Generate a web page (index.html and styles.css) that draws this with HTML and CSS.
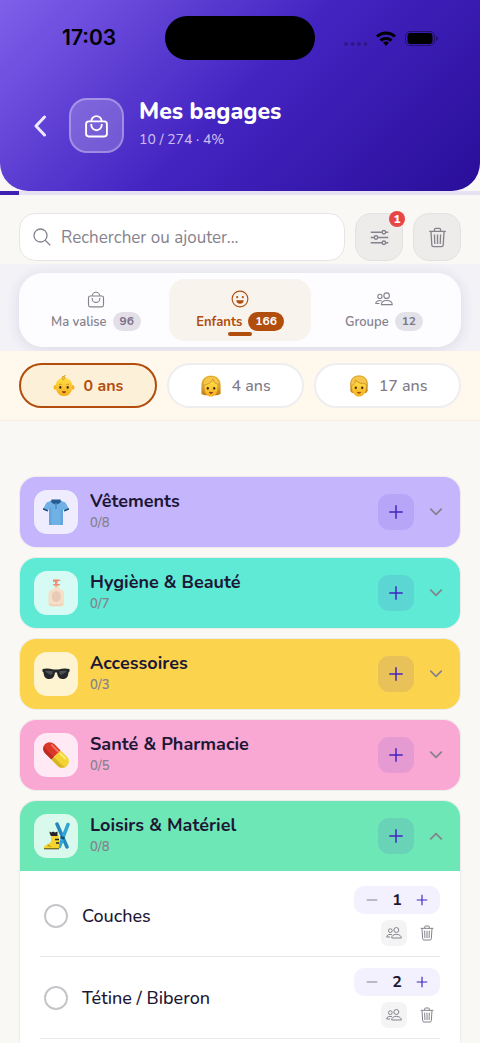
FILE: index.html
```html
<!doctype html>
<html lang="fr">
    <head>
        <meta charset="UTF-8" />
        <meta name="viewport" content="width=device-width, initial-scale=1.0" />
        <title>Mes bagages</title>
        <link rel="stylesheet" href="styles.css">
    </head>
    <body>
        <!-- Icon sprite -->
        <svg class="sprite" aria-hidden="true">
            <symbol id="bag" viewBox="0 0 24 24">
                <rect x="2" y="8" width="20" height="14.5" rx="2.5" />
                <path d="M7 8a5 5 0 0 1 10 0M7 10.5v1a5 5 0 0 0 10 0v-1" />
            </symbol>
            <symbol id="trash" viewBox="0 0 24 24">
                <path d="M2.5 5h19M4.5 5l1 15.5a2 2 0 0 0 2 2h9a2 2 0 0 0 2-2L19.5 5M8.5 5V3A1.5 1.5 0 0 1 10 1.5h4A1.5 1.5 0 0 1 15.5 3v2M12 8.5v11M8.5 8.5l.4 11M15.5 8.5l-.4 11" />
            </symbol>
            <symbol id="people" viewBox="0 0 24 24">
                <circle cx="15.5" cy="7.5" r="3.7" />
                <circle cx="6.5" cy="8.5" r="2.8" />
                <path d="M8.5 19.5c0-3.500 3-5.500 7-5.500s7.500 2 7.500 5.500zM9 14.700C5 13 1 15 1 18h5" />
            </symbol>
            <symbol id="plus" viewBox="0 0 24 24">
                <path d="M12 3v18M3 12h18" />
            </symbol>
            <symbol id="minus" viewBox="0 0 24 24">
                <path d="M3 12h18" />
            </symbol>
            <symbol id="chevron" viewBox="0 0 24 24">
                <path d="M3 7l9 9 9-9" />
            </symbol>
            <linearGradient id="skin" x1="0" y1="0" x2="0" y2="1">
                <stop offset="0" stop-color="#ffdf45" />
                <stop offset="1" stop-color="#f5ad20" />
            </linearGradient>
            <linearGradient id="hair" x1="0" y1="0" x2="0" y2="1">
                <stop offset="0" stop-color="#fbd75c" />
                <stop offset="1" stop-color="#c07a12" />
            </linearGradient>
        </svg>

        <div class="app">
            <header class="header">
                <div class="status">
                    <span class="time">17:03</span>
                    <span class="island"></span>
                    <svg class="signals" viewBox="0 -1 95 20" aria-hidden="true">
                        <g opacity=".25"><circle cx="2" cy="15" r="2" /><circle cx="8.5" cy="15" r="2" /><circle cx="15" cy="15" r="2" /><circle cx="21.5" cy="15" r="2" /></g>
                        <g fill="none" stroke="#000" stroke-width="3">
                            <path d="M33 7.5a13.5 13.5 0 0 1 18 0M36.5 11.5a8.5 8.5 0 0 1 11 0" />
                        </g>
                        <path d="M39 13.5q3-2 6 0l-3 3.500z" />
                        <rect x="61.5" y="2.5" width="29" height="14" rx="4.5" fill="none" stroke="#000" opacity=".4" />
                        <rect x="63.5" y="4" width="25" height="11" rx="3" />
                        <path d="M92 7v5q2-1 2-2.500T92 7z" opacity=".4" />
                    </svg>
                </div>
                <div class="heading">
                    <button class="back" aria-label="Retour">
                        <svg viewBox="0 0 14 22"><path d="M11.5 2L3 11l8.500 9" /></svg>
                    </button>
                    <span class="heading-icon"><svg><use href="#bag" /></svg></span>
                    <div class="heading-text">
                        <h1>Mes bagages</h1>
                        <p>10 / 274 · 4%</p>
                    </div>
                </div>
            </header>
            <div class="progress"><span class="progress-bar" style="width: 4%"></span></div>

            <div class="toolbar">
                <label class="search">
                    <svg viewBox="0 0 18 18"><circle cx="7.5" cy="7.5" r="6.5" /><path d="M12.2 12.200l5 5" /></svg>
                    <input type="text" placeholder="Rechercher ou ajouter..." aria-label="Rechercher ou ajouter" />
                </label>
                <button class="tool" aria-label="Filtres">
                    <svg viewBox="0 0 24 24">
                        <path d="M2 6h13M19 6h3M2 12h4M10 12h12M2 18h13M19 18h3" />
                        <circle cx="17" cy="6" r="2" /><circle cx="8" cy="12" r="2" /><circle cx="17" cy="18" r="2" />
                    </svg>
                    <span class="badge">1</span>
                </button>
                <button class="tool" aria-label="Supprimer"><svg><use href="#trash" /></svg></button>
            </div>

            <div class="tabs-wrap">
                <nav class="tabs">
                    <button class="tab">
                        <svg><use href="#bag" /></svg>
                        <span class="tab-label">Ma valise <b class="count count-mauve">96</b></span>
                    </button>
                    <button class="tab active">
                        <svg viewBox="0 0 24 24">
                            <circle cx="12" cy="12" r="10.5" />
                            <path class="solid" d="M8 14.500h8c-.3 1.800-1.800 3-4 3s-3.700-1.200-4-3z" />
                            <circle class="solid" cx="8.2" cy="9.5" r=".6" /><circle class="solid" cx="15.8" cy="9.5" r=".6" />
                        </svg>
                        <span class="tab-label">Enfants <b class="count">166</b></span>
                    </button>
                    <button class="tab">
                        <svg><use href="#people" /></svg>
                        <span class="tab-label">Groupe <b class="count">12</b></span>
                    </button>
                </nav>
            </div>

            <div class="children">
                <button class="child selected">
                    <svg viewBox="0 0 24 24">
                        <circle cx="3" cy="13.5" r="2.5" fill="#f5b521" /><circle cx="21" cy="13.5" r="2.5" fill="#f5b521" />
                        <path d="M12 3c-6 0-9 4-9 9.500C3 19 7 23 12 23s9-4 9-10.500C21 7 18 3 12 3z" fill="url(#skin)" />
                        <path d="M12.5 5.500c-3-.5-3.500-3.500 0-4.500-1 1-.5 2 1 2.500" fill="none" stroke="#d99c19" stroke-width="1.2" />
                        <ellipse cx="8" cy="13.5" rx="1.2" ry="1.6" fill="#3d2a1d" /><ellipse cx="16" cy="13.5" rx="1.2" ry="1.6" fill="#3d2a1d" />
                        <path d="M6.5 10.500q1.500-1 3 0M14.500 10.500q1.500-1 3 0" fill="none" stroke="#bb7815" stroke-width=".7" />
                        <path d="M10 18.300h4q-2 2.500-4 0z" fill="#8b4220" stroke="#8b4220" />
                    </svg>
                    0 ans
                </button>
                <button class="child">
                    <svg viewBox="0 0 24 24">
                        <path d="M12 .5C5 .5 1.500 5 1.500 11v9.500q2 2 5 1.500h11q3 .5 5-1.500V11C22.500 5 19 .5 12 .5z" fill="url(#hair)" />
                        <path d="M5 10c5 0 7.500-1.500 9-3.500 1 2 3 3.500 5 3.500v5c0 5-3 8.500-7 8.500S5 20 5 15z" fill="url(#skin)" />
                        <path d="M3 11C8 11 12.500 8.500 14 4.500c1 3.500 4 5.500 7 6 0-6-4-9-9-9S3 5 3 11z" fill="#f6c64a" stroke="#c98a1c" stroke-width=".7" />
                        <ellipse cx="8.5" cy="14.5" rx="1.2" ry="1.5" fill="#3d2a1d" /><ellipse cx="15.5" cy="14.5" rx="1.2" ry="1.5" fill="#3d2a1d" />
                        <path d="M10 19h4q-2 2.300-4 0z" fill="#8b4220" stroke="#8b4220" />
                    </svg>
                    4 ans
                </button>
                <button class="child">
                    <svg viewBox="0 0 24 24">
                        <path d="M12 .5C6 .5 2.500 4 2.500 10v7q.5 2.500 3 3h13q2.500-.5 3-3v-7C21.500 4 18 .5 12 .5z" fill="url(#hair)" />
                        <path d="M4.5 10c2-.5 3-2 3.500-3.500C11 9 15 10 19.500 10v5c0 5-3.500 8.500-7.500 8.500S4.500 20 4.500 15z" fill="url(#skin)" />
                        <path d="M3.5 12.500C2 5 6 1 12 1s10 4 8.500 11.500c-.5-2-1-2.500-2-3C14.500 9.500 10.500 8 8 5.500c.5 3-1.500 5-4.500 7z" fill="#f6c64a" stroke="#c98a1c" stroke-width=".7" />
                        <ellipse cx="8.5" cy="14" rx="1.2" ry="1.5" fill="#3d2a1d" /><ellipse cx="15.5" cy="14" rx="1.2" ry="1.5" fill="#3d2a1d" />
                        <path d="M10 19h4q-2 2-4 0z" fill="#8b4220" stroke="#8b4220" stroke-width=".7" />
                    </svg>
                    17 ans
                </button>
            </div>

            <main class="list">
                <!-- Clothes -->
                <section class="category">
                    <div class="category-head lilac">
                        <span class="category-icon">
                            <svg viewBox="0 0 28 28">
                                <path d="M9.5 2.500L4.500 4.500.8 11.500l4.700 2L7 11V27h14V11l1.500 2.500 4.700-2-3.700-7-5-2z" fill="#70b1e5" />
                                <path d="M7 11v16h2.500V9zM18.500 11v16H21V11z" fill="#5398d2" opacity=".45" />
                                <path d="M9.5 1.500h9L19 4l-3.500 2.500L14 5l-1.500 1.500L9 4z" fill="#265b94" />
                                <path d="M.8 11.500l4.700 2 .6-1.200L1.500 10zM27.200 11.500l-4.700 2-.6-1.200L26.500 10z" fill="#204a7c" />
                                <path d="M14 6v5" stroke="#397bb7" />
                            </svg>
                        </span>
                        <div class="category-text"><h2>Vêtements</h2><p>0/8</p></div>
                        <button class="add" aria-label="Ajouter"><svg><use href="#plus" /></svg></button>
                        <button class="toggle" aria-label="Ouvrir"><svg><use href="#chevron" /></svg></button>
                    </div>
                </section>

                <!-- Hygiene -->
                <section class="category">
                    <div class="category-head teal">
                        <span class="category-icon">
                            <svg viewBox="0 0 28 28">
                                <path d="M13 4h2.500v5H13z" fill="#f3b49b" />
                                <path d="M11 .5h6q1.500 0 1.500 1.500h-3v2.500h-2.500V2.500L11 3z" fill="#f08b6c" />
                                <rect x="11" y="5" width="7" height="1.5" rx=".7" fill="#ee8d70" />
                                <path d="M12 8h5v2c3.500.5 5 2 5 5v10q0 2.500-3 2.500H9.500q-3 0-3-2.500V15c0-3 2-4.500 5.500-5z" fill="#f5dfc6" />
                                <ellipse cx="14.3" cy="17.5" rx="4.5" ry="5.5" fill="#e9cab9" />
                                <path d="M7.5 25.500q6 2 13 0" fill="none" stroke="#e5c7b0" />
                            </svg>
                        </span>
                        <div class="category-text"><h2>Hygiène &amp; Beauté</h2><p>0/7</p></div>
                        <button class="add" aria-label="Ajouter"><svg><use href="#plus" /></svg></button>
                        <button class="toggle" aria-label="Ouvrir"><svg><use href="#chevron" /></svg></button>
                    </div>
                </section>

                <!-- Accessories -->
                <section class="category">
                    <div class="category-head yellow">
                        <span class="category-icon">
                            <svg viewBox="0 0 28 28">
                                <path d="M.5 9q5-1 11 .5h5Q22 8 27.500 9v2.500l-1 1c-.5 5-2.500 6.500-6 6.500-4 0-5-3-5.500-6.500h-2C12.500 16 11.500 19 7.500 19c-3.500 0-5.500-1.500-6-6.500l-1-1z" fill="#25282b" />
                                <path d="M3 11q4-.8 8 .2-.5 2.800-2 3.800-4-1.500-6-4zM17 11.200q4-1 8-.2-2 2.500-6 4-1.500-1-2-3.800z" fill="#4b5154" />
                            </svg>
                        </span>
                        <div class="category-text"><h2>Accessoires</h2><p>0/3</p></div>
                        <button class="add" aria-label="Ajouter"><svg><use href="#plus" /></svg></button>
                        <button class="toggle" aria-label="Ouvrir"><svg><use href="#chevron" /></svg></button>
                    </div>
                </section>

                <!-- Health -->
                <section class="category">
                    <div class="category-head pink">
                        <span class="category-icon">
                            <svg viewBox="0 0 28 28">
                                <g transform="rotate(45 14 14)">
                                    <path d="M14 7.500H5a6.500 6.500 0 0 0 0 13h9z" fill="#dc3829" />
                                    <path d="M14 7.500h9a6.500 6.500 0 0 1 0 13h-9z" fill="#f2d331" />
                                    <path d="M-1 16a6.500 6.500 0 0 0 6 4.500h9V17H5q-4 0-6-1z" fill="#a92119" opacity=".6" />
                                    <path d="M14 17h9q4 0 6-1a6.500 6.500 0 0 1-6 4.500h-9z" fill="#c89e18" opacity=".6" />
                                    <path d="M4 10h9" stroke="#f0745f" stroke-width="2" stroke-linecap="round" />
                                    <path d="M16 10h7" stroke="#fbec78" stroke-width="2" stroke-linecap="round" />
                                </g>
                            </svg>
                        </span>
                        <div class="category-text"><h2>Santé &amp; Pharmacie</h2><p>0/5</p></div>
                        <button class="add" aria-label="Ajouter"><svg><use href="#plus" /></svg></button>
                        <button class="toggle" aria-label="Ouvrir"><svg><use href="#chevron" /></svg></button>
                    </div>
                </section>

                <!-- Leisure, open -->
                <section class="category">
                    <div class="category-head green">
                        <span class="category-icon">
                            <svg viewBox="0 0 28 28">
                                <path d="M15 2L25 25" stroke="#2587bd" stroke-width="3.5" stroke-linecap="round" />
                                <path d="M26 2.500L17.500 24.500" stroke="#35a5d4" stroke-width="3.5" stroke-linecap="round" />
                                <path d="M9 13h7.500l1 5-.5 9H2v-2.500l7-4.500z" fill="#f5d32f" />
                                <path d="M7.500 9.500l2 1 1.500-1 2 1 2.500-1V14H9q-1.500-2-1.500-4.500z" fill="#22242a" />
                                <path d="M13 17.500h4M14 21h3" stroke="#22242a" stroke-width="1.5" />
                                <path d="M2 26.800h15" fill="none" stroke="#4c4422" />
                                <path d="M5.500 23l3 1.500" stroke="#9c851d" />
                                <path d="M18.5 15l4 1.500" stroke="#174d72" stroke-width="2.5" />
                            </svg>
                        </span>
                        <div class="category-text"><h2>Loisirs &amp; Matériel</h2><p>0/8</p></div>
                        <button class="add" aria-label="Ajouter"><svg><use href="#plus" /></svg></button>
                        <button class="toggle open" aria-label="Fermer"><svg><use href="#chevron" /></svg></button>
                    </div>
                    <ul class="items">
                        <li class="item">
                            <label class="item-name"><input type="checkbox" /> Couches</label>
                            <div class="item-actions">
                                <div class="stepper">
                                    <button class="less" aria-label="Moins"><svg><use href="#minus" /></svg></button>
                                    <span>1</span>
                                    <button aria-label="Plus"><svg><use href="#plus" /></svg></button>
                                </div>
                                <div class="item-tools">
                                    <button class="share" aria-label="Partager"><svg><use href="#people" /></svg></button>
                                    <button aria-label="Supprimer"><svg><use href="#trash" /></svg></button>
                                </div>
                            </div>
                        </li>
                        <li class="item">
                            <label class="item-name"><input type="checkbox" /> Tétine / Biberon</label>
                            <div class="item-actions">
                                <div class="stepper">
                                    <button class="less" aria-label="Moins"><svg><use href="#minus" /></svg></button>
                                    <span>2</span>
                                    <button aria-label="Plus"><svg><use href="#plus" /></svg></button>
                                </div>
                                <div class="item-tools">
                                    <button class="share" aria-label="Partager"><svg><use href="#people" /></svg></button>
                                    <button aria-label="Supprimer"><svg><use href="#trash" /></svg></button>
                                </div>
                            </div>
                        </li>
                    </ul>
                </section>
            </main>
        </div>
    </body>
</html>
```
FILE: styles.css
```css
* {
    box-sizing: border-box;
}

body {
    margin: 0;
    font-family: Nunito, Lato, sans-serif;
    color: #1d1735;
    background: #f9f8f4;
}

h1,
h2,
p,
ul {
    margin: 0;
    padding: 0;
}

button {
    padding: 0;
    border: none;
    background: none;
    font: inherit;
    color: inherit;
    cursor: pointer;
}

svg {
    display: block;
    flex-shrink: 0;
}

.sprite {
    position: absolute;
    width: 0;
    height: 0;
}

.app {
    display: flex;
    flex-direction: column;
    height: 100vh;
    overflow: hidden;
}

.app > * {
    flex-shrink: 0;
}

/* Header */
.header {
    padding: 16px 20px 38px;
    color: #fff;
    background: linear-gradient(135deg, #7f60ea 0%, #4324c1 50%, #290e99 100%);
    border-radius: 0 0 28px 28px;
}

.status {
    display: grid;
    grid-template-columns: 1fr 150px 1fr;
    align-items: center;
    color: #000;
}

.time {
    padding-left: 42px;
    font-family: Inter, sans-serif;
    font-size: 21px;
    line-height: 44px;
    font-weight: 600;
}

.island {
    height: 44px;
    border-radius: 22px;
    background: #000;
}

.signals {
    width: 95px;
    height: 20px;
    margin-right: 21px;
    justify-self: end;
}

.heading {
    display: flex;
    align-items: center;
    margin-top: 38px;
}

.back {
    display: flex;
    justify-content: center;
    width: 40px;
    margin-right: 9px;
}

.back svg {
    width: 14px;
    height: 22px;
    fill: none;
    stroke: #eee9ff;
    stroke-width: 3;
    stroke-linecap: round;
    stroke-linejoin: round;
}

.heading-icon {
    display: flex;
    align-items: center;
    justify-content: center;
    width: 55px;
    height: 55px;
    margin-right: 15px;
    background: rgba(255, 255, 255, 0.2);
    border: 2px solid rgba(255, 255, 255, 0.3);
    border-radius: 18px;
}

.heading-icon svg {
    width: 25px;
    height: 25px;
    fill: none;
    stroke: #fff;
    stroke-width: 1.8;
}

.heading h1 {
    font-size: 23px;
    line-height: 28px;
    font-weight: 800;
}

.heading p {
    font-size: 14px;
    line-height: 27px;
    font-weight: 500;
    color: #c6baf0;
}

.progress {
    height: 4px;
    background: #e7e2f3;
}

.progress-bar {
    display: block;
    height: 100%;
    background: #3f22b3;
}

/* Search and tools */
.toolbar {
    display: flex;
    gap: 10px;
    padding: 18px 19px 3px;
}

.search {
    display: flex;
    flex: 1;
    align-items: center;
    gap: 10px;
    min-width: 0;
    height: 48px;
    padding: 0 13px;
    background: #fff;
    border: 1px solid #e6e4e8;
    border-radius: 16px;
}

.search svg {
    width: 18px;
    height: 18px;
    fill: none;
    stroke: #85828c;
    stroke-width: 1.3;
}

.search input {
    flex: 1;
    min-width: 0;
    padding: 0;
    border: none;
    outline: none;
    font: inherit;
    font-size: 17px;
    background: none;
}

.search input::placeholder {
    color: #85828c;
    opacity: 1;
}

.tool {
    position: relative;
    display: flex;
    align-items: center;
    justify-content: center;
    width: 48px;
    height: 48px;
    background: #edecea;
    border: 1px solid #e3e1e3;
    border-radius: 16px;
}

.tool svg {
    width: 21px;
    height: 21px;
    fill: none;
    stroke: #85828c;
    stroke-width: 1.5;
}

.badge {
    position: absolute;
    top: -3px;
    right: -3px;
    width: 16px;
    height: 16px;
    border-radius: 8px;
    background: #e84545;
    color: #fff;
    font-size: 12px;
    line-height: 16px;
    font-weight: 800;
}

/* Tabs */
.tabs-wrap {
    padding: 9px 19px 4px;
    background: #f3f2f7;
}

.tabs {
    display: grid;
    grid-template-columns: repeat(3, 1fr);
    gap: 2px;
    padding: 6px;
    background: #fdfdff;
    border-radius: 24px;
    box-shadow: 0 2px 14px rgba(50, 35, 110, 0.12);
}

.tab {
    position: relative;
    display: flex;
    flex-direction: column;
    align-items: center;
    justify-content: flex-start;
    gap: 4px;
    height: 62px;
    padding-top: 11px;
    border-radius: 16px;
    color: #85828c;
    font-size: 13px;
    font-weight: 600;
}

.tab svg {
    width: 18px;
    height: 18px;
    fill: none;
    stroke: currentColor;
    stroke-width: 1.5;
}

.tab .solid {
    fill: currentColor;
}

.tab-label {
    display: flex;
    align-items: center;
    gap: 6px;
}

.count {
    padding: 0 7px;
    border-radius: 10px;
    background: #e3e2e8;
    color: #7e7989;
    font-size: 12px;
    line-height: 19px;
    font-weight: 700;
}

.count-mauve {
    background: #e3dfe8;
    color: #7d708b;
}

.tab.active {
    background: #f8f3ed;
    color: #b24e0d;
    font-weight: 700;
}

.tab.active .count {
    background: #b24e0d;
    color: #fff;
}

.tab.active::after {
    content: "";
    position: absolute;
    bottom: 5px;
    width: 24px;
    height: 4px;
    border-radius: 2px;
    background: #b24e0d;
}

/* Children */
.children {
    display: flex;
    gap: 10px;
    padding: 12px 19px;
    background: #fff8ed;
    border-bottom: 1px solid #f6eee5;
}

.child {
    display: flex;
    flex: 1 1 auto;
    align-items: center;
    justify-content: center;
    gap: 9px;
    height: 45px;
    border: 2px solid #eeedf0;
    border-radius: 23px;
    background: #fff;
    color: #7e7b86;
    font-size: 16px;
    font-weight: 500;
}

.child svg {
    width: 22px;
    height: 22px;
}

.child.selected {
    background: #fdf0d9;
    border-color: #b24e0d;
    color: #b24e0d;
    font-weight: 700;
}

/* Categories */
.app > .list {
    flex: 1;
    min-height: 0;
    display: flex;
    flex-direction: column;
    gap: 11px;
    padding: 56px 20px 0;
    overflow: hidden;
}

.category {
    flex-shrink: 0;
    overflow: hidden;
    background: #fff;
    border-radius: 16px;
    box-shadow: 0 0 0 1px rgba(30, 20, 60, 0.05);
}

.category-head {
    display: flex;
    align-items: center;
    height: 70px;
    padding: 0 17px 0 14px;
}

.lilac {
    background: #c4b5fd;
}

.teal {
    background: #5eead4;
}

.yellow {
    background: #fcd34d;
}

.pink {
    background: #f9a8d4;
}

.green {
    background: #6ee7b7;
}

.category-icon {
    display: flex;
    align-items: center;
    justify-content: center;
    width: 44px;
    height: 44px;
    margin-right: 12px;
    border-radius: 13px;
    background: rgba(255, 255, 255, 0.75);
}

.category-icon svg {
    width: 28px;
    height: 28px;
}

.category-text {
    flex: 1;
}

.category-text h2 {
    font-size: 18px;
    line-height: 22px;
    font-weight: 700;
}

.category-text p {
    font-size: 13px;
    line-height: 23px;
    font-weight: 600;
    color: #85828c;
}

.add {
    display: flex;
    align-items: center;
    justify-content: center;
    width: 36px;
    height: 36px;
    border-radius: 11px;
    background: rgba(67, 36, 193, 0.1);
}

.add svg {
    width: 18px;
    height: 18px;
    fill: none;
    stroke: #4324c1;
    stroke-width: 2;
}

.toggle {
    margin-left: 15px;
}

.toggle svg {
    width: 14px;
    height: 14px;
    fill: none;
    stroke: #85828c;
    stroke-width: 3;
    stroke-linecap: round;
    stroke-linejoin: round;
}

.toggle.open svg {
    transform: rotate(180deg);
}

/* Items */
.items {
    padding: 4px 20px 20px;
    list-style: none;
}

.item {
    display: flex;
    align-items: center;
    justify-content: space-between;
    padding: 11px 0 10px;
    border-bottom: 1px solid #e9e8eb;
}

.item-name {
    display: flex;
    align-items: center;
    gap: 14px;
    padding-left: 4px;
    font-size: 18px;
    font-weight: 500;
}

.item-name input {
    appearance: none;
    width: 24px;
    height: 24px;
    margin: 0;
    border: 2px solid #c6c5ca;
    border-radius: 50%;
}

.item-actions {
    display: flex;
    flex-direction: column;
    align-items: flex-end;
    gap: 6px;
}

.stepper {
    display: flex;
    align-items: center;
    justify-content: space-between;
    width: 86px;
    height: 28px;
    padding: 0 11px;
    border-radius: 10px;
    background: #f3f1fd;
    font-size: 16px;
    font-weight: 700;
}

.stepper svg {
    width: 14px;
    height: 14px;
    fill: none;
    stroke: #4324c1;
    stroke-width: 2;
}

.stepper .less svg {
    stroke: #85828c;
}

.item-tools {
    display: flex;
    gap: 7px;
}

.item-tools button {
    display: flex;
    align-items: center;
    justify-content: center;
    width: 26px;
    height: 26px;
    border-radius: 7px;
}

.item-tools .share {
    background: #f4f4f4;
}

.item-tools svg {
    width: 16px;
    height: 16px;
    fill: none;
    stroke: #85828c;
    stroke-width: 1.5;
}
```
